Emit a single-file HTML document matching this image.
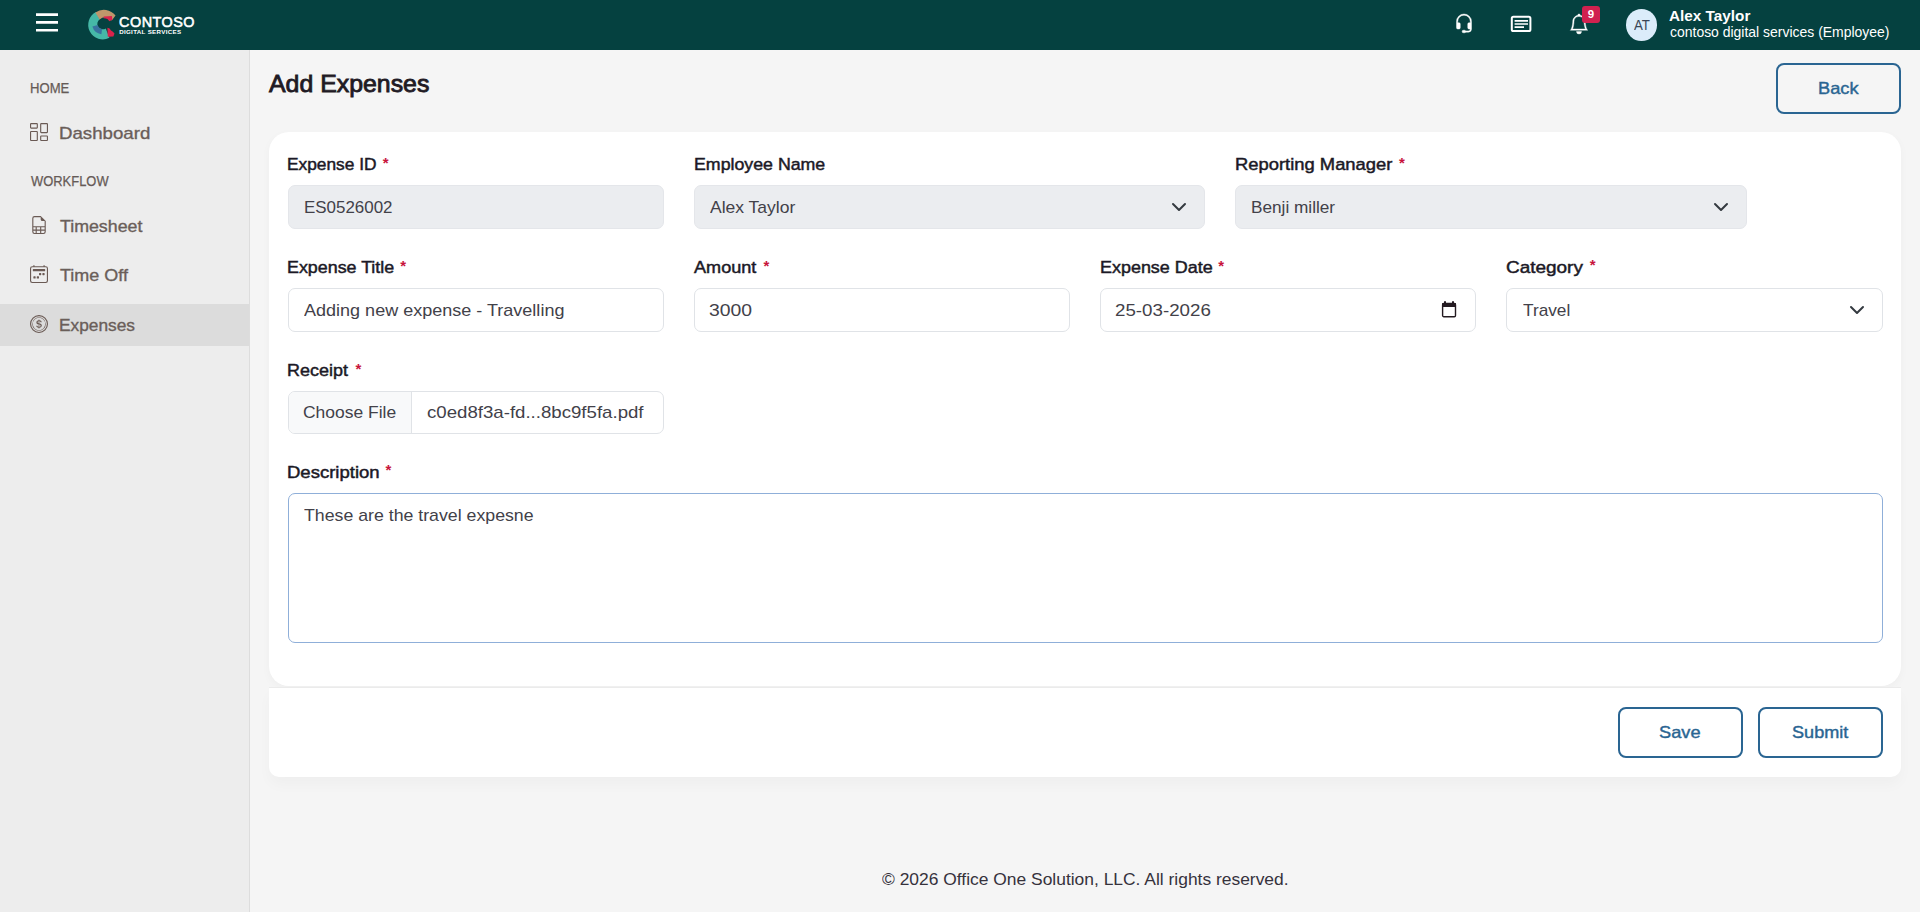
<!DOCTYPE html>
<html lang="en">
<head>
<meta charset="utf-8">
<title>Add Expenses</title>
<style>
*{box-sizing:border-box;margin:0;padding:0}
html,body{width:1920px;height:912px;overflow:hidden}
body{position:relative;background:#f5f5f5;font-family:"Liberation Sans",sans-serif;color:#1f1a24}
.t{position:absolute;white-space:nowrap;line-height:1;display:block;transform-origin:0 0}
svg{position:absolute;overflow:visible}
#hdr{position:absolute;left:0;top:0;width:1920px;height:50px;background:#054140}
#side{position:absolute;left:0;top:50px;width:250px;height:862px;background:#ededed;border-right:1px solid #dddddd}
#act{position:absolute;left:0;top:304px;width:249px;height:42px;background:#dcdcdc}
.sec{font-size:14.5px;color:#665b57;-webkit-text-stroke:0.25px #665b57}
.it{font-size:17px;color:#6a5e59;-webkit-text-stroke:0.35px #6a5e59}
#title{font-size:24.5px;color:#1f1a24;-webkit-text-stroke:0.85px #1f1a24}
.btn{position:absolute;border:2px solid #2a6592;border-radius:8px;height:51px;width:125px}
.bt{font-size:16.5px;color:#2a6592;-webkit-text-stroke:0.4px #2a6592}
#card{position:absolute;left:269px;top:132px;width:1632px;height:645px}
#cbody{position:absolute;left:0;top:0;width:1632px;height:554px;background:#fff;border-radius:20px;box-shadow:0 3px 10px rgba(0,0,0,.03)}
#cfoot{position:absolute;left:0;top:555px;width:1632px;height:90px;background:#fff;border-top:1px solid #ebebeb;border-radius:0 0 10px 10px;box-shadow:0 8px 14px rgba(0,0,0,.028)}
.lb{font-size:16.3px;color:#1b1926;-webkit-text-stroke:0.45px #1b1926}
.as{font-size:15px;color:#c8143c;font-weight:bold}
.in{position:absolute;height:44px;border:1px solid #e0e3e7;border-radius:7px;background:#fff}
.in.dis{background:#ebedf0;border-color:#e4e6ea}
.v{font-size:17px;color:#424149}
#copy{font-size:17.3px;color:#36323c}
.w{color:#fff}
#contoso{left:119.11px;top:14.61px;letter-spacing:0.492px;transform:scaleX(1.0000)}
#ds{left:119.14px;top:29.35px;letter-spacing:0.326px;transform:scaleX(1.0000)}
#at{left:1633.82px;top:17.85px;letter-spacing:0.000px;transform:scaleX(0.9485)}
#uname{left:1669.45px;top:9.14px;letter-spacing:0.000px;transform:scaleX(1.0483)}
#org{left:1669.55px;top:24.30px;letter-spacing:0.000px;transform:scaleX(0.9303)}
#nine{left:1587.64px;top:8.67px;letter-spacing:0.000px;transform:scaleX(1.0000)}
#home{left:29.58px;top:81.43px;letter-spacing:0.000px;transform:scaleX(0.9038)}
#dash{left:59.26px;top:124.91px;letter-spacing:0.000px;transform:scaleX(1.0979)}
#work{left:31.17px;top:174.48px;letter-spacing:0.000px;transform:scaleX(0.8920)}
#tsheet{left:60.48px;top:217.71px;letter-spacing:0.000px;transform:scaleX(1.0464)}
#toff{left:60.32px;top:266.51px;letter-spacing:0.000px;transform:scaleX(1.0573)}
#exps{left:59.11px;top:316.61px;letter-spacing:0.000px;transform:scaleX(1.0181)}
#title{left:268.71px;top:72.26px;letter-spacing:0.000px;transform:scaleX(1.0150)}
#back{left:1817.87px;top:80.03px;letter-spacing:0.000px;transform:scaleX(1.1044)}
#save{left:1659.10px;top:724.43px;letter-spacing:0.000px;transform:scaleX(1.1044)}
#submit{left:1792.12px;top:724.43px;letter-spacing:0.000px;transform:scaleX(1.0971)}
#l1{left:287.25px;top:156.20px;letter-spacing:0.000px;transform:scaleX(1.0632)}
#l2{left:693.81px;top:156.20px;letter-spacing:0.000px;transform:scaleX(1.0904)}
#l3{left:1235.03px;top:156.20px;letter-spacing:0.000px;transform:scaleX(1.1292)}
#l4{left:287.49px;top:259.20px;letter-spacing:0.000px;transform:scaleX(1.0967)}
#l5{left:694.25px;top:259.20px;letter-spacing:0.000px;transform:scaleX(1.1117)}
#l6{left:1100.20px;top:259.20px;letter-spacing:0.000px;transform:scaleX(1.1019)}
#l7{left:1506.03px;top:259.20px;letter-spacing:0.000px;transform:scaleX(1.1637)}
#l8{left:286.99px;top:362.20px;letter-spacing:0.000px;transform:scaleX(1.1027)}
#l9{left:286.71px;top:464.20px;letter-spacing:0.000px;transform:scaleX(1.1374)}
#v1{left:303.70px;top:198.71px;letter-spacing:0.000px;transform:scaleX(0.9957)}
#v2{left:709.91px;top:198.71px;letter-spacing:0.000px;transform:scaleX(1.0298)}
#v3{left:1250.81px;top:198.71px;letter-spacing:0.000px;transform:scaleX(1.0113)}
#v4{left:303.63px;top:301.71px;letter-spacing:0.000px;transform:scaleX(1.0599)}
#v5{left:709.35px;top:301.71px;letter-spacing:0.000px;transform:scaleX(1.1383)}
#v6{left:1115.47px;top:301.71px;letter-spacing:0.000px;transform:scaleX(1.1016)}
#v7{left:1523.21px;top:301.71px;letter-spacing:0.000px;transform:scaleX(1.0143)}
#v8a{left:303.09px;top:403.61px;letter-spacing:0.000px;transform:scaleX(1.0275)}
#v8b{left:427.24px;top:403.61px;letter-spacing:0.000px;transform:scaleX(1.0962)}
#v9{left:304.17px;top:506.61px;letter-spacing:0.000px;transform:scaleX(1.0426)}
#copy{left:881.75px;top:870.86px;letter-spacing:0.000px;transform:scaleX(1.0079)}
#a1{left:382.70px;top:154.73px;letter-spacing:0.000px;transform:scaleX(1.0000)}
#a3{left:1399.02px;top:154.66px;letter-spacing:0.000px;transform:scaleX(1.0000)}
#a4{left:400.17px;top:257.65px;letter-spacing:0.000px;transform:scaleX(1.0000)}
#a5{left:763.54px;top:257.86px;letter-spacing:0.000px;transform:scaleX(1.0000)}
#a6{left:1218.33px;top:257.65px;letter-spacing:0.000px;transform:scaleX(1.0000)}
#a7{left:1589.66px;top:256.97px;letter-spacing:0.000px;transform:scaleX(1.0000)}
#a8{left:355.38px;top:360.57px;letter-spacing:0.000px;transform:scaleX(1.0000)}
#a9{left:385.61px;top:462.02px;letter-spacing:0.000px;transform:scaleX(1.0000)}
</style>
</head>
<body>

<div id="hdr"></div>
<!-- hamburger -->
<svg style="left:36px;top:13px" width="22" height="19" viewBox="0 0 22 19"><path d="M0 1.6h22M0 9.4h22M0 17.2h22" stroke="#fff" stroke-width="2.6" fill="none"/></svg>
<!-- logo -->
<svg style="left:86px;top:8px" width="32" height="34" viewBox="86 8 32 34">
  <path d="M96 11.9 A14.5 14.6 0 1 0 109.4 37.8 L105.75 28.5 A5.5 5.5 0 0 1 99.85 19.2 Z" fill="#46b8a7"/>
  <path d="M97.7 25.1 A5.5 5.5 0 0 0 102.05 29.1 L101.4 34.2 A10.7 10.7 0 0 1 92.4 26.6 Z" fill="#39729f"/>
  <path d="M95.4 12.5 A14.5 14.6 0 0 1 115.5 15.6 L111.8 20.4 A8 8 0 0 0 99.6 19.6 Z" fill="#bf966b"/>
  <path d="M103.6 16.6 L111.9 16 L112.4 19.8 L109.4 21.2 A5.5 5.5 0 0 0 103.9 18.4 Z" fill="#d9234c"/>
  <path d="M107.4 27.8 L109.6 28.6 L111 30.6 L112.6 31.4 L114.5 33.4 L113.4 36.4 L107.8 36.8 Z" fill="#d9234c"/>
</svg>
<span class="t w" id="contoso" style="font-size:14.4px;-webkit-text-stroke:0.55px #fff">CONTOSO</span>
<span class="t w" id="ds" style="font-size:6.2px;font-weight:bold">DIGITAL SERVICES</span>

<!-- header icons -->
<svg style="left:1453.5px;top:14px" width="20" height="20" viewBox="0 0 16 16" fill="#fff" stroke="#fff" stroke-width="0.35"><path d="M8 1a5 5 0 0 0-5 5v1h1a1 1 0 0 1 1 1v3a1 1 0 0 1-1 1H3a1 1 0 0 1-1-1V6a6 6 0 1 1 12 0v6a2.5 2.5 0 0 1-2.5 2.5H9.366a1 1 0 0 1-.866.5h-1a1 1 0 1 1 0-2h1a1 1 0 0 1 .866.5H11.5A1.5 1.5 0 0 0 13 12h-1a1 1 0 0 1-1-1V8a1 1 0 0 1 1-1h1V6a5 5 0 0 0-5-5"/></svg>
<svg style="left:1510px;top:15px" width="22" height="18" viewBox="0 0 22 18" fill="none" stroke="#fff"><rect x="1.8" y="1.8" width="18.6" height="14.2" rx="1.6" stroke-width="2"/><path d="M4.6 5.9H18M4.6 9H18M4.6 12.1H14" stroke-width="1.7"/></svg>
<svg style="left:1568.5px;top:14px" width="20" height="20" viewBox="0 0 16 16" fill="#fff" stroke="#fff" stroke-width="0.3"><path d="M8 16a2 2 0 0 0 2-2H6a2 2 0 0 0 2 2M8 1.918l-.797.161A4 4 0 0 0 4 6c0 .628-.134 2.197-.459 3.742-.16.767-.376 1.566-.663 2.258h10.244c-.287-.692-.502-1.49-.663-2.258C12.134 8.197 12 6.628 12 6a4 4 0 0 0-3.203-3.92zM14.22 12c.223.447.481.801.78 1H1c.299-.199.557-.553.78-1C2.68 10.2 3 6.88 3 6c0-2.42 1.72-4.44 4.005-4.901a1 1 0 1 1 1.99 0A5 5 0 0 1 13 6c0 .88.32 4.2 1.22 6"/></svg>
<div style="position:absolute;left:1582px;top:6px;width:18px;height:16.5px;border-radius:3px;background:#d0214f"></div>
<span class="t w" id="nine" style="font-size:11.5px;font-weight:bold">9</span>
<div style="position:absolute;left:1625.7px;top:9px;width:31.6px;height:32px;border-radius:50%;background:#dbecfa"></div>
<span class="t" id="at" style="font-size:14px;color:#3a4556">AT</span>
<span class="t w" id="uname" style="font-size:14.6px;font-weight:bold">Alex Taylor</span>
<span class="t w" id="org" style="font-size:15px">contoso digital services (Employee)</span>

<!-- sidebar -->
<div id="side"></div>
<div id="act"></div>
<span class="t sec" id="home">HOME</span>
<span class="t sec" id="work">WORKFLOW</span>
<span class="t it" id="dash">Dashboard</span>
<span class="t it" id="tsheet">Timesheet</span>
<span class="t it" id="toff">Time Off</span>
<span class="t it" id="exps">Expenses</span>
<svg style="left:30px;top:123px" width="18" height="18" viewBox="0 0 16 16" fill="#6a5a54"><path d="M6 1v3H1V1zM1 0a1 1 0 0 0-1 1v3a1 1 0 0 0 1 1h5a1 1 0 0 0 1-1V1a1 1 0 0 0-1-1zm14 12v3h-5v-3zm-5-1a1 1 0 0 0-1 1v3a1 1 0 0 0 1 1h5a1 1 0 0 0 1-1v-3a1 1 0 0 0-1-1zM6 8v7H1V8zM1 7a1 1 0 0 0-1 1v7a1 1 0 0 0 1 1h5a1 1 0 0 0 1-1V8a1 1 0 0 0-1-1zm14-6v7h-5V1zm-5-1a1 1 0 0 0-1 1v7a1 1 0 0 0 1 1h5a1 1 0 0 0 1-1V1a1 1 0 0 0-1-1z"/></svg>
<svg style="left:30px;top:216px" width="18" height="18" viewBox="0 0 16 16" fill="#6a5a54"><path d="M14 14V4.5L9.5 0H4a2 2 0 0 0-2 2v12a2 2 0 0 0 2 2h8a2 2 0 0 0 2-2M9.5 3A1.5 1.5 0 0 0 11 4.5h2V9H3V2a1 1 0 0 1 1-1h5.5zM3 12v-2h2v2zm0 1h2v2H4a1 1 0 0 1-1-1zm3 2v-2h3v2zm4 0v-2h3v1a1 1 0 0 1-1 1zm3-3h-3v-2h3zm-7 0v-2h3v2z"/></svg>
<svg style="left:30px;top:265px" width="18" height="18" viewBox="0 0 16 16" fill="#6a5a54"><path d="M3.5 0a.5.5 0 0 1 .5.5V1h8V.5a.5.5 0 0 1 1 0V1h1a2 2 0 0 1 2 2v11a2 2 0 0 1-2 2H2a2 2 0 0 1-2-2V3a2 2 0 0 1 2-2h1V.5a.5.5 0 0 1 .5-.5M2 2a1 1 0 0 0-1 1v11a1 1 0 0 0 1 1h12a1 1 0 0 0 1-1V3a1 1 0 0 0-1-1z"/><path d="M2.5 4a.5.5 0 0 1 .5-.5h10a.5.5 0 0 1 .5.5v1a.5.5 0 0 1-.5.5H3a.5.5 0 0 1-.5-.5zM11 7.5a.5.5 0 0 1 .5-.5h1a.5.5 0 0 1 .5.5v1a.5.5 0 0 1-.5.5h-1a.5.5 0 0 1-.5-.5zm-3 0a.5.5 0 0 1 .5-.5h1a.5.5 0 0 1 .5.5v1a.5.5 0 0 1-.5.5h-1a.5.5 0 0 1-.5-.5zm-5 3a.5.5 0 0 1 .5-.5h1a.5.5 0 0 1 .5.5v1a.5.5 0 0 1-.5.5h-1a.5.5 0 0 1-.5-.5zm3 0a.5.5 0 0 1 .5-.5h1a.5.5 0 0 1 .5.5v1a.5.5 0 0 1-.5.5h-1a.5.5 0 0 1-.5-.5z"/></svg>
<svg style="left:30px;top:315px" width="18" height="18" viewBox="0 0 16 16" fill="#6a5a54"><path d="M5.5 9.511c.076.954.83 1.697 2.182 1.785V12h.6v-.709c1.4-.098 2.218-.846 2.218-1.932 0-.987-.626-1.496-1.745-1.76l-.473-.112V5.57c.6.068.982.396 1.074.85h1.052c-.076-.919-.864-1.638-2.126-1.716V4h-.6v.719c-1.195.117-2.01.836-2.01 1.853 0 .9.606 1.472 1.613 1.707l.397.098v2.034c-.615-.093-1.022-.43-1.114-.9zm2.177-2.166c-.59-.137-.91-.416-.91-.836 0-.47.345-.822.915-.925v1.76h-.005zm.692 1.193c.717.166 1.048.435 1.048.91 0 .542-.412.914-1.135.982V8.518z"/><path d="M8 15A7 7 0 1 1 8 1a7 7 0 0 1 0 14m0 1A8 8 0 1 0 8 0a8 8 0 0 0 0 16"/><path d="M8 13.5a5.5 5.5 0 1 1 0-11 5.5 5.5 0 0 1 0 11m0 .5A6 6 0 1 0 8 2a6 6 0 0 0 0 12"/></svg>

<!-- main -->
<span class="t" id="title">Add Expenses</span>
<div class="btn" style="left:1776px;top:63px"></div>
<span class="t bt" id="back">Back</span>

<div id="card"><div id="cbody"></div><div id="cfoot"></div></div>

<div class="in dis" style="left:288px;top:185px;width:376px"></div>
<div class="in dis" style="left:694px;top:185px;width:511px"></div>
<div class="in dis" style="left:1235px;top:185px;width:512px"></div>
<div class="in" style="left:288px;top:288px;width:376px"></div>
<div class="in" style="left:694px;top:288px;width:376px"></div>
<div class="in" style="left:1100px;top:288px;width:376px"></div>
<div class="in" style="left:1506px;top:288px;width:377px"></div>
<div class="in" style="left:288px;top:391px;width:376px;height:43px"><div style="position:absolute;left:0;top:0;width:123px;height:41px;background:#f8f9fa;border-right:1px solid #e0e3e7;border-radius:6px 0 0 6px"></div></div>
<div class="in" style="left:288px;top:493px;width:1595px;height:150px;border-color:#8fafd9"></div>

<span class="t lb" id="l1">Expense ID</span><span class="t as" id="a1">*</span>
<span class="t lb" id="l2">Employee Name</span>
<span class="t lb" id="l3">Reporting Manager</span><span class="t as" id="a3">*</span>
<span class="t lb" id="l4">Expense Title</span><span class="t as" id="a4">*</span>
<span class="t lb" id="l5">Amount</span><span class="t as" id="a5">*</span>
<span class="t lb" id="l6">Expense Date</span><span class="t as" id="a6">*</span>
<span class="t lb" id="l7">Category</span><span class="t as" id="a7">*</span>
<span class="t lb" id="l8">Receipt</span><span class="t as" id="a8">*</span>
<span class="t lb" id="l9">Description</span><span class="t as" id="a9">*</span>

<span class="t v" id="v1">ES0526002</span>
<span class="t v" id="v2">Alex Taylor</span>
<span class="t v" id="v3">Benji miller</span>
<span class="t v" id="v4">Adding new expense - Travelling</span>
<span class="t v" id="v5">3000</span>
<span class="t v" id="v6">25-03-2026</span>
<span class="t v" id="v7">Travel</span>
<span class="t v" id="v8a">Choose File</span>
<span class="t v" id="v8b">c0ed8f3a-fd...8bc9f5fa.pdf</span>
<span class="t v" id="v9">These are the travel expesne</span>

<!-- chevrons -->
<svg style="left:1171px;top:199px" width="16" height="16" viewBox="0 0 16 16"><path d="m2 5 6 6 6-6" fill="none" stroke="#343a40" stroke-width="2" stroke-linecap="round" stroke-linejoin="round"/></svg>
<svg style="left:1713px;top:199px" width="16" height="16" viewBox="0 0 16 16"><path d="m2 5 6 6 6-6" fill="none" stroke="#343a40" stroke-width="2" stroke-linecap="round" stroke-linejoin="round"/></svg>
<svg style="left:1849px;top:301.5px" width="16" height="16" viewBox="0 0 16 16"><path d="m2 5 6 6 6-6" fill="none" stroke="#343a40" stroke-width="2" stroke-linecap="round" stroke-linejoin="round"/></svg>
<!-- date icon -->
<svg style="left:1441px;top:300px" width="16" height="18" viewBox="0 0 16 18"><path d="M3 1.2h2v2H3zM11 1.2h2v2h-2z" fill="#231a20"/><rect x="1.6" y="3.5" width="12.9" height="13.2" rx="1.2" fill="none" stroke="#231a20" stroke-width="1.4"/><rect x="1.2" y="3" width="13.7" height="4" fill="#231a20"/></svg>

<div class="btn" style="left:1618px;top:707px"></div>
<div class="btn" style="left:1758px;top:707px"></div>
<span class="t bt" id="save">Save</span>
<span class="t bt" id="submit">Submit</span>

<span class="t" id="copy">© 2026 Office One Solution, LLC. All rights reserved.</span>

</body>
</html>
